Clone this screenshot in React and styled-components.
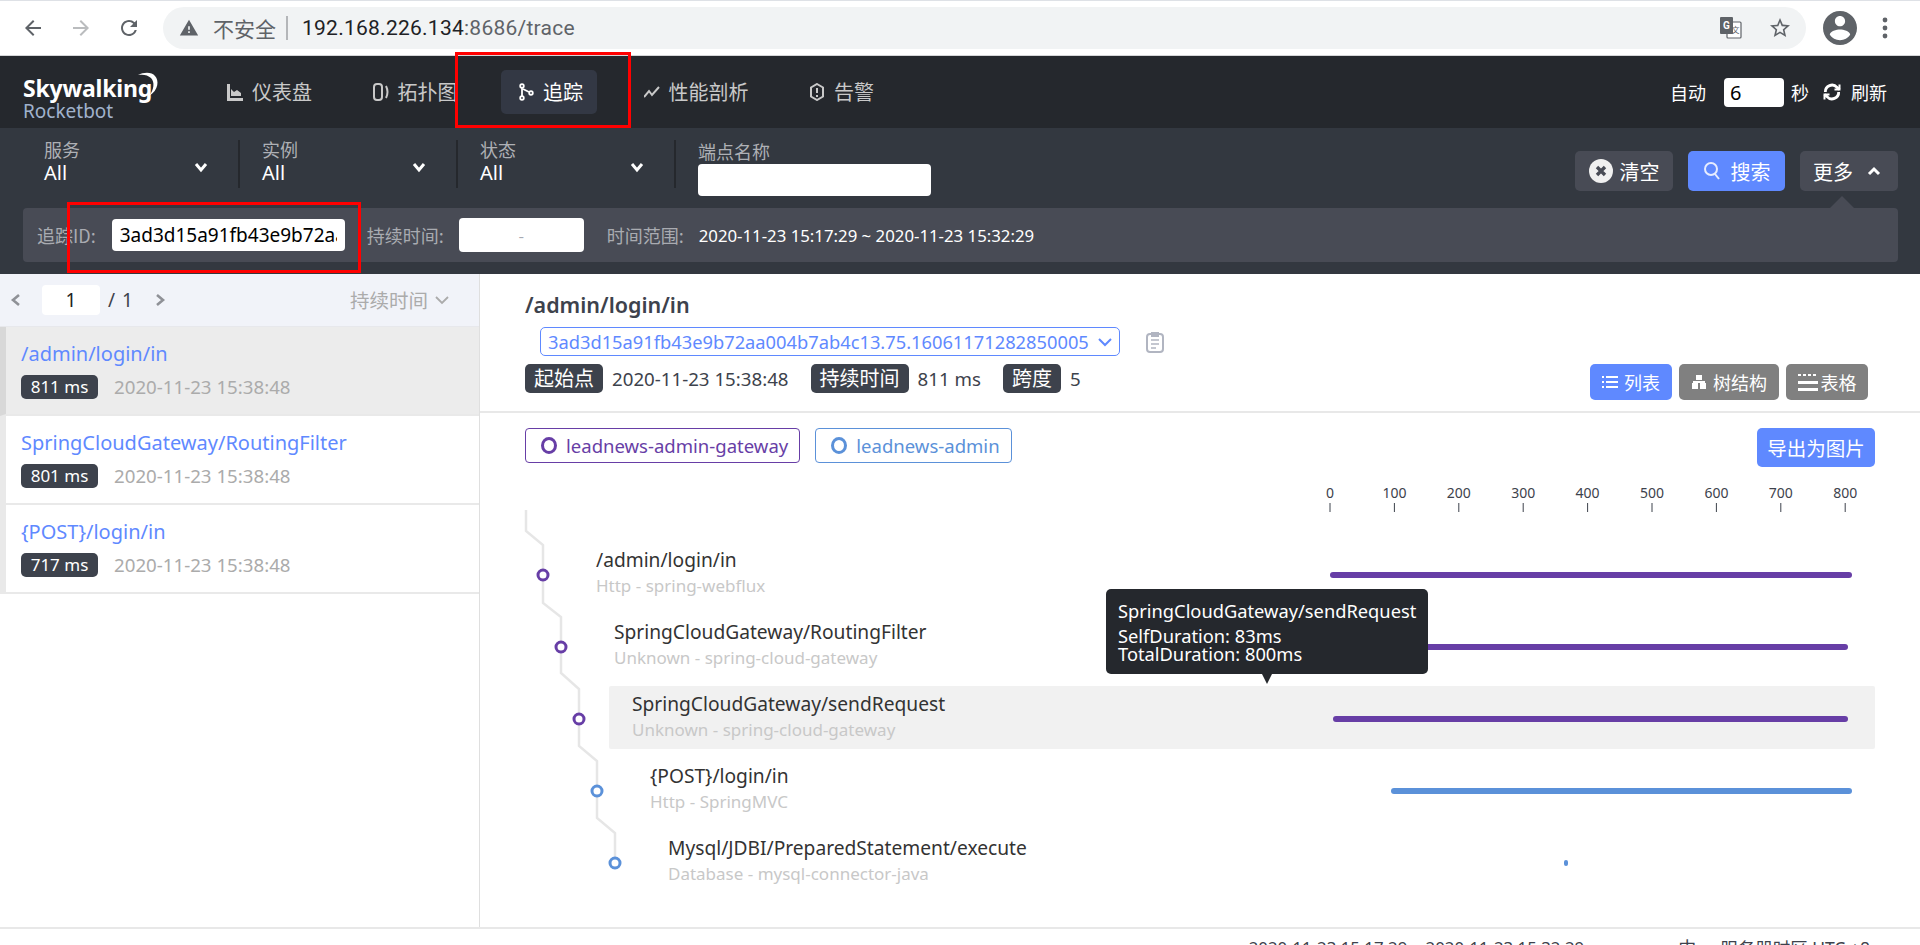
import React from 'react';
import styled, { createGlobalStyle } from 'styled-components';

const GlobalStyle = createGlobalStyle`
  html, body {
    margin: 0;
    padding: 0;
    overflow: hidden;
    background: #fff;
  }
  body {
    font-family: "Noto Sans", "Noto Sans CJK SC", sans-serif;
    color: #3d424c;
  }
  * { box-sizing: border-box; }
`;

const Page = styled.div`
  position: relative;
  width: 1920px;
  height: 945px;
  overflow: hidden;
  display: flex;
  flex-direction: column;
`;

/* ---- browser chrome ---- */
const BrowserBar = styled.div`
  height: 56px;
  flex: none;
  display: flex;
  align-items: center;
  background: #fff;
  border-top: 1px solid #dee1e6;
  border-bottom: 1px solid #d5d6d8;
  padding-bottom: 1px;
`;

const BrowserBtn = styled.svg`
  flex: none;
  width: 24px;
  height: 24px;
  margin-left: ${p => p.$gap}px;
  fill: ${p => p.$muted ? '#babcbe' : '#5f6368'};
`;

const AddressPill = styled.div`
  width: 1643px;
  height: 42px;
  margin-left: 22px;
  border-radius: 21px;
  background: #f1f3f4;
  display: flex;
  align-items: center;
  padding-left: 16px;
`;

const Warning = styled.svg`
  width: 20px;
  height: 20px;
  fill: #5f6368;
`;

const Insecure = styled.span`
  margin-left: 14px;
  font-family: "Noto Sans CJK SC", sans-serif;
  font-size: 21px;
  line-height: 28px;
  color: #5f6368;
`;

const AddressSep = styled.span`
  width: 2px;
  height: 24px;
  margin: 0 14px 0 10px;
  background: #b4b6b9;
`;

const Url = styled.span`
  font-family: Roboto, sans-serif;
  font-size: 21px;
  color: #202124;
  letter-spacing: 0.25px;
  span { color: #5f6368; }
`;

const PillTools = styled.div`
  margin-left: auto;
  display: flex;
  align-items: center;
  gap: 26px;
  padding-right: 14px;
`;

const ChromeRight = styled.div`
  display: flex;
  align-items: center;
  margin-left: 17px;
  gap: 24px;
`;

const Avatar = styled.svg`
  width: 34px;
  height: 34px;
  fill: #5f6368;
`;

const Dots = styled.svg`
  width: 8px;
  height: 24px;
  fill: #5f6368;
`;

/* ---- app header ---- */
const Header = styled.header`
  height: 72px;
  flex: none;
  background: #25282d;
  display: flex;
  align-items: center;
  color: #fff;
`;

const Logo = styled.div`
  position: relative;
  width: 210px;
  height: 72px;
  padding: 17px 0 0 23px;
`;

const LogoMain = styled.div`
  font-size: 23px;
  line-height: 30px;
  font-weight: 700;
  letter-spacing: -0.2px;
  color: #fff;
`;

const LogoSub = styled.div`
  font-size: 19px;
  line-height: 20px;
  margin-top: -2px;
  color: #a0b2cc;
`;

const Moon = styled.svg`
  position: absolute;
  left: 136px;
  top: 16px;
  width: 24px;
  height: 28px;
  fill: #fff;
`;

const Nav = styled.nav`
  display: flex;
  align-items: center;
  gap: 29.5px;
`;

const NavItem = styled.a`
  height: 44px;
  display: flex;
  align-items: center;
  gap: 9px;
  padding: 0 14px 0 17px;
  border-radius: 5px;
  font-family: "Noto Sans CJK SC", sans-serif;
  font-size: 20px;
  line-height: 28px;
  color: ${p => p.$active ? '#fff' : '#c9c9c9'};
  background: ${p => p.$active ? '#333844' : 'transparent'};
  svg { width: 16px; height: 18px; flex: none; }
`;

const RefreshArea = styled.div`
  margin-left: auto;
  display: flex;
  align-items: center;
  padding-right: 33px;
  font-family: "Noto Sans CJK SC", sans-serif;
  font-size: 18px;
`;

const AutoInput = styled.div`
  width: 60px;
  height: 29px;
  margin: 0 7px 0 18px;
  padding-left: 6px;
  border-radius: 4px;
  background: #fff;
  color: #000;
  font-family: "Noto Sans", sans-serif;
  font-size: 20px;
  line-height: 29px;
`;

const RefreshIcon = styled.svg`
  width: 20px;
  height: 20px;
  margin: 0 9px 0 13px;
  fill: none;
  stroke: #fff;
  stroke-width: 3.4;
`;

/* ---- filter bar ---- */
const FilterBar = styled.section`
  height: 146px;
  flex: none;
  background: #333840;
  padding: 12px 22px 12px 22px;
  font-family: "Noto Sans CJK SC", sans-serif;
`;

const FilterTop = styled.div`
  height: 68px;
  display: flex;
  align-items: flex-start;
`;

const Selector = styled.div`
  position: relative;
  width: 218px;
  height: 48px;
  padding-left: 22px;
  border-right: 2px solid #25282d;
`;

const SelectorLabel = styled.div`
  font-size: 18px;
  line-height: 19px;
  margin-bottom: 2px;
  color: #aeb0b5;
`;

const SelectorValue = styled.div`
  font-family: "Noto Sans", sans-serif;
  font-size: 20px;
  line-height: 24px;
  color: #fff;
`;

const SelectorChevron = styled.svg`
  position: absolute;
  left: 172px;
  top: 20px;
  width: 14px;
  height: 14px;
  fill: none;
  stroke: #fff;
  stroke-width: 3;
`;

const EndpointField = styled.div`
  margin-left: 22px;
  width: 233px;
`;

const EndpointLabel = styled.div`
  font-size: 18px;
  line-height: 22px;
  margin-bottom: 2px;
  color: #aeb0b5;
`;

const WhiteInput = styled.div`
  width: ${p => p.$w}px;
  height: ${p => p.$h}px;
  margin-left: ${p => p.$m || 0}px;
  background: #fff;
  border-radius: 4px;
  overflow: hidden;
  white-space: nowrap;
`;

const FilterActions = styled.div`
  margin-left: auto;
  display: flex;
  gap: 15px;
  padding-top: 11px;
`;

const ActionBtn = styled.button`
  position: relative;
  width: ${p => p.$w}px;
  height: 40px;
  border: 0;
  border-radius: 5px;
  background: ${p => p.$primary ? '#5f89ff' : '#484b55'};
  color: #fff;
  font-family: inherit;
  font-size: 20px;
  display: flex;
  align-items: center;
  justify-content: center;
  gap: ${p => p.$gap || 8}px;
  padding: 0 ${p => p.$arrow ? 4 : 0}px 0 0;
  svg { flex: none; }
  ${p => p.$arrow && `
    &::after {
      content: "";
      position: absolute;
      left: 30px;
      bottom: -17px;
      border: 12px solid transparent;
      border-top: 0;
      border-bottom-color: #484b55;
    }
  `}
`;

const MorePanel = styled.div`
  height: 54px;
  margin-left: 1px;
  border-radius: 4px;
  background: #484b55;
  display: flex;
  align-items: center;
  padding-left: 14px;
`;

const PanelLabel = styled.span`
  font-size: 18px;
  color: #a9abb1;
  white-space: nowrap;
  margin: ${p => p.$m || 0};
`;

const TraceIdText = styled.div`
  font-family: "Noto Sans", sans-serif;
  font-size: 19px;
  line-height: 32px;
  color: #000;
  margin-left: 8px;
  width: 217px;
  overflow: hidden;
`;

const DurationBox = styled(WhiteInput)`
  text-align: center;
  color: #a6a9b2;
  font-size: 16px;
  line-height: 34px;
`;

const RangeText = styled.span`
  font-family: "Noto Sans", sans-serif;
  font-size: 16.8px;
  color: #fff;
  white-space: nowrap;
`;

/* ---- body ---- */
const Body = styled.main`
  flex: 1;
  display: flex;
  min-height: 0;
`;

const TraceList = styled.aside`
  width: 480px;
  flex: none;
  border-right: 1px solid #dfdfdf;
`;

const Pager = styled.div`
  height: 53px;
  display: flex;
  align-items: center;
  padding: 0 30px 1px 10px;
  background: #f1f3f9;
  border-bottom: 1px solid #e7e8ec;
`;

const PagerChevron = styled.svg`
  width: ${p => p.$w || 12}px;
  height: 14px;
  fill: none;
  stroke: ${p => p.$thin ? '#ababab' : '#8f9197'};
  stroke-width: ${p => p.$thin ? 1.8 : 2.6};
  margin: ${p => p.$m || 0};
`;

const PageInput = styled.div`
  width: 58px;
  height: 30px;
  background: #fff;
  border-radius: 4px;
  text-align: center;
  font-size: 19px;
  line-height: 30px;
  color: #222;
`;

const PageTotal = styled.span`
  font-size: 19px;
  color: #3d424c;
  margin-left: 8px;
  word-spacing: 2px;
`;

const SortBy = styled.div`
  margin-left: auto;
  display: flex;
  align-items: center;
  gap: 7px;
  color: #ababab;
  font-family: "Noto Sans CJK SC", sans-serif;
  font-size: 19.5px;
`;

const TraceItem = styled.div`
  height: 89px;
  padding: 13px 0 0 15px;
  border-left: 6px solid ${p => p.$active ? '#d8d8d8' : '#e9e9e9'};
  border-bottom: 2px solid #e9e9e9;
  background: ${p => p.$active ? '#ececec' : '#fff'};
`;

const TraceTitle = styled.div`
  font-size: 20px;
  line-height: 28px;
  color: #5f89ff;
`;

const TraceMeta = styled.div`
  margin-top: 6px;
  display: flex;
  align-items: center;
  gap: 16px;
`;

const MsBadge = styled.span`
  width: 77px;
  height: 24px;
  border-radius: 5px;
  background: #3d424c;
  color: #fff;
  font-size: 17px;
  line-height: 24px;
  text-align: center;
`;

const TraceDate = styled.span`
  font-size: 18.7px;
  line-height: 26px;
  color: #ababab;
`;

const Detail = styled.div`
  flex: 1;
  min-width: 0;
`;

const DetailHead = styled.div`
  padding: 19px 52px 11px 45px;
  border-bottom: 2px solid #e8e8e8;
`;

const DetailTitle = styled.h2`
  margin: 0;
  font-size: 21.5px;
  line-height: 24px;
  font-weight: 600;
  color: #3d424c;
`;

const IdRow = styled.div`
  margin-top: 10px;
  display: flex;
  align-items: center;
  padding-left: 15px;
  gap: 26px;
`;

const IdSelect = styled.div`
  width: 580px;
  height: 29px;
  border: 1px solid #5f89ff;
  border-radius: 5px;
  color: #5f89ff;
  display: flex;
  align-items: center;
  justify-content: space-between;
  padding: 0 7px;
  font-size: 18.3px;
  white-space: nowrap;
`;

const ClipboardIcon = styled.svg`
  width: 18px;
  height: 22px;
  fill: none;
  stroke: #b1b5c1;
  stroke-width: 2;
`;

const MetaRow = styled.div`
  margin-top: 8px;
  height: 36px;
  display: flex;
  align-items: flex-start;
  justify-content: space-between;
`;

const MetaList = styled.div`
  display: flex;
  align-items: center;
  height: 29px;
`;

const MetaTag = styled.span`
  height: 29px;
  padding: 0 9px;
  background: #3d424c;
  border-radius: 5px;
  color: #fff;
  font-family: "Noto Sans CJK SC", sans-serif;
  font-size: 20px;
  line-height: 28px;
`;

const MetaValue = styled.span`
  margin: 0 22px 0 9px;
  font-size: 18.7px;
`;

const ViewSwitch = styled.div`
  display: flex;
  gap: 7px;
`;

const ViewBtn = styled.button`
  height: 36px;
  width: ${p => p.$w}px;
  border: 0;
  padding: 0;
  border-radius: 5px;
  background: ${p => p.$active ? '#5f89ff' : '#808080'};
  color: #fff;
  font-family: "Noto Sans CJK SC", sans-serif;
  font-size: 18px;
  display: flex;
  align-items: center;
  justify-content: center;
  gap: ${p => p.$gap || 6}px;
`;

const LegendRow = styled.div`
  padding: 15px 45px 0;
  display: flex;
  align-items: flex-start;
  justify-content: space-between;
`;

const Legends = styled.div`
  display: flex;
  gap: 15px;
`;

const Legend = styled.div`
  height: 35px;
  padding: 0 11px 0 15px;
  display: flex;
  align-items: center;
  gap: 9px;
  border: 1px solid ${p => p.$color};
  border-radius: 4px;
  color: ${p => p.$color};
  font-size: 18.55px;
`;

const LegendDot = styled.span`
  width: 16px;
  height: 17px;
  border: 3px solid ${p => p.$color};
  border-radius: 50%;
`;

const ExportBtn = styled.button`
  width: 118px;
  height: 39px;
  border: 0;
  padding: 0;
  border-radius: 5px;
  background: #5f89ff;
  color: #fff;
  font-family: "Noto Sans CJK SC", sans-serif;
  font-size: 19.5px;
`;

const Timeline = styled.div`
  position: relative;
`;

const Axis = styled.svg`
  display: block;
  width: 1440px;
  height: 48px;
  margin-bottom: 27px;
  text { font-size: 14px; fill: #3d424c; text-anchor: middle; }
  line { stroke: #3d424c; stroke-width: 1; }
`;

const Connector = styled.svg`
  position: absolute;
  left: 0;
  top: 0;
  width: 160px;
  height: 420px;
  pointer-events: none;
`;

const SpanRow = styled.div`
  position: relative;
  height: 63px;
  margin: 0 45px 9px ${p => 93 + p.$depth * 18}px;
  padding: 5px 0 0 23px;
  border-radius: 2px;
  background: ${p => p.$hover ? '#f1f1f1' : 'transparent'};
`;

const SpanName = styled.div`
  font-size: 19.2px;
  line-height: 26px;
  color: #333;
`;

const SpanSub = styled.div`
  font-size: 17px;
  line-height: 26px;
  color: #c8c8c8;
`;

const SpanBar = styled.div`
  position: absolute;
  top: 30px;
  height: 6px;
  border-radius: 3px;
  background: ${p => p.$color};
`;

const Tooltip = styled.div`
  position: absolute;
  left: 626px;
  top: 122px;
  width: 322px;
  height: 85px;
  padding: 9px 0 0 12px;
  background: #25282d;
  border-radius: 5px;
  color: #fff;
  font-size: 18.3px;
  line-height: 18px;
  white-space: nowrap;
  &::after {
    content: "";
    position: absolute;
    left: 156px;
    bottom: -10px;
    border-left: 5px solid transparent;
    border-right: 5px solid transparent;
    border-top: 10px solid #25282d;
  }
`;

const TooltipHead = styled.div`
  margin-bottom: 4px;
  line-height: 25px;
`;

const Footer = styled.footer`
  height: 18px;
  flex: none;
  border-top: 2px solid #e8e8e8;
  background: #fff;
  display: flex;
  justify-content: flex-end;
  align-items: flex-start;
  padding: 9px 50px 0 0;
  line-height: 20px;
  color: #3d424c;
`;

const FooterItem = styled.span`
  margin-left: ${p => p.$m || 0}px;
  font-size: ${p => p.$size}px;
  white-space: nowrap;
`;

/* the red boxes someone drew on the screenshot */
const Annotation = styled.div`
  position: absolute;
  left: ${p => p.$x}px;
  top: ${p => p.$y}px;
  width: ${p => p.$w}px;
  height: ${p => p.$h}px;
  border: 3px solid #f00;
  pointer-events: none;
`;

const PURPLE = '#673ea6';
const BLUE = '#5b91d9';

const traces = [
  { name: '/admin/login/in', ms: 811, active: true },
  { name: 'SpringCloudGateway/RoutingFilter', ms: 801 },
  { name: '{POST}/login/in', ms: 717 },
];

const spans = [
  { name: '/admin/login/in', sub: 'Http - spring-webflux', color: PURPLE, start: 0, dur: 811 },
  { name: 'SpringCloudGateway/RoutingFilter', sub: 'Unknown - spring-cloud-gateway', color: PURPLE, start: 4, dur: 801 },
  { name: 'SpringCloudGateway/sendRequest', sub: 'Unknown - spring-cloud-gateway', color: PURPLE, start: 4, dur: 800, hover: true },
  { name: '{POST}/login/in', sub: 'Http - SpringMVC', color: BLUE, start: 94, dur: 717 },
  { name: 'Mysql/JDBI/PreparedStatement/execute', sub: 'Database - mysql-connector-java', color: BLUE, start: 364, dur: 5 },
];

const TICK = 0.644;
const ticks = [0, 100, 200, 300, 400, 500, 600, 700, 800];
const axisX = ms => 850 + ms * TICK;

const linePoints = '46,43 46,64 63,78 63,136 81,150 81,206 99,222 99,279 117,294 117,351 135,366 135,396';
const nodes = [
  [63, 108, PURPLE], [81, 180, PURPLE], [99, 252, PURPLE], [117, 324, BLUE], [135, 396, BLUE],
];

const Chevron = ({ up }) => (
  <svg width="14" height="10" viewBox="0 0 14 10" fill="none" stroke="#fff" strokeWidth="3">
    <path d={up ? 'M2 8l5-5 5 5' : 'M2 2l5 5 5-5'} />
  </svg>
);

const App = () => (
  <Page>
    <GlobalStyle />
    <BrowserBar>
      <BrowserBtn $gap={21} viewBox="0 0 24 24"><path d="M20 11H7.83l5.59-5.59L12 4l-8 8 8 8 1.41-1.41L7.83 13H20v-2z" /></BrowserBtn>
      <BrowserBtn $gap={24} $muted viewBox="0 0 24 24"><path d="M4 11h12.17l-5.59-5.59L12 4l8 8-8 8-1.41-1.41L16.17 13H4v-2z" /></BrowserBtn>
      <BrowserBtn $gap={24} viewBox="0 0 24 24"><path d="M17.65 6.35A7.958 7.958 0 0 0 12 4c-4.42 0-7.99 3.58-7.99 8s3.57 8 7.99 8c3.73 0 6.84-2.55 7.73-6h-2.08A5.99 5.99 0 0 1 12 18c-3.31 0-6-2.69-6-6s2.69-6 6-6c1.66 0 3.14.69 4.22 1.78L13 11h7V4l-2.35 2.35z" /></BrowserBtn>
      <AddressPill>
        <Warning viewBox="0 0 24 24"><path d="M1 21h22L12 2 1 21zm12-3h-2v-2h2v2zm0-4h-2v-4h2v4z" /></Warning>
        <Insecure>不安全</Insecure>
        <AddressSep />
        <Url>192.168.226.134<span>:8686/trace</span></Url>
        <PillTools>
          <svg width="22" height="22" viewBox="0 0 22 22">
            <rect x="7" y="5" width="14" height="16" rx="1" fill="#fff" stroke="#5f6368" strokeWidth="1.2" />
            <rect x="0" y="0" width="13" height="17" rx="1" fill="#5f6368" />
            <text x="6.5" y="12" fontSize="10" fontWeight="700" fill="#fff" textAnchor="middle" fontFamily="Roboto">G</text>
            <text x="15.5" y="16" fontSize="8" fill="#5f6368" textAnchor="middle" fontFamily="Noto Sans CJK SC">文</text>
          </svg>
          <BrowserBtn $gap={0} viewBox="0 0 24 24"><path d="M22 9.24l-7.19-.62L12 2 9.19 8.63 2 9.24l5.46 4.73L5.82 21 12 17.27 18.18 21l-1.63-7.03L22 9.24zM12 15.4l-3.76 2.27 1-4.28-3.32-2.88 4.38-.38L12 6.1l1.71 4.04 4.38.38-3.32 2.88 1 4.28L12 15.4z" /></BrowserBtn>
        </PillTools>
      </AddressPill>
      <ChromeRight>
        <Avatar viewBox="2 2 20 20"><path d="M12 2C6.48 2 2 6.48 2 12s4.48 10 10 10 10-4.48 10-10S17.52 2 12 2zm0 3c1.66 0 3 1.34 3 3s-1.34 3-3 3-3-1.34-3-3 1.34-3 3-3zm0 14.2c-2.5 0-4.71-1.28-6-3.22.03-1.99 4-3.08 6-3.08 1.99 0 5.97 1.09 6 3.08-1.29 1.94-3.5 3.22-6 3.22z" /></Avatar>
        <Dots viewBox="0 0 8 24"><circle cx="4" cy="4" r="2.4" /><circle cx="4" cy="12" r="2.4" /><circle cx="4" cy="20" r="2.4" /></Dots>
      </ChromeRight>
    </BrowserBar>

    <Header>
      <Logo>
        <LogoMain>Skywalking</LogoMain>
        <LogoSub>Rocketbot</LogoSub>
        <Moon viewBox="0 0 24 28"><path d="M2 3C8 0 16 0 19 4c4 4 4 14-6 20 5-6 6-14 2-18C12 3 7 2 2 3z" /></Moon>
      </Logo>
      <Nav>
        <NavItem>
          <svg viewBox="0 0 16 18" fill="#c9c9c9"><path d="M0 1h3v14h13v3H0zM4 13V6l3 3 3-2 4 3v3z" /></svg>
          仪表盘
        </NavItem>
        <NavItem>
          <svg viewBox="0 0 16 18" fill="none" stroke="#c9c9c9" strokeWidth="2"><rect x="1" y="1" width="8" height="16" rx="3" /><path d="M13 3c2 4 2 8 0 12" /></svg>
          拓扑图
        </NavItem>
        <NavItem $active>
          <svg viewBox="0 0 16 18" fill="none" stroke="#fff" strokeWidth="1.8"><circle cx="4" cy="3" r="1.8" /><circle cx="4" cy="15" r="1.8" /><circle cx="13" cy="10" r="1.8" /><path d="M4 5v8M5 6l6 3" /></svg>
          追踪
        </NavItem>
        <NavItem>
          <svg viewBox="0 0 16 18" fill="none" stroke="#c9c9c9" strokeWidth="2"><path d="M0 14l5-6 3 4 7-8" /></svg>
          性能剖析
        </NavItem>
        <NavItem>
          <svg viewBox="0 0 16 18" fill="none" stroke="#c9c9c9" strokeWidth="2"><path d="M8 1l6 3.5v9L8 17l-6-3.5v-9z" /><path d="M8 5v5M8 12v2" /></svg>
          告警
        </NavItem>
      </Nav>
      <RefreshArea>
        自动
        <AutoInput>6</AutoInput>
        秒
        <RefreshIcon viewBox="0 0 24 24"><path d="M4 12a8 8 0 0 1 14-5.500L21 9M20 12a8 8 0 0 1-14 5.500L3 15" /><path d="M21 3v6h-6M3 21v-6h6" strokeWidth="2.4" /></RefreshIcon>
        刷新
      </RefreshArea>
    </Header>

    <FilterBar>
      <FilterTop>
        {['服务', '实例', '状态'].map(label => (
          <Selector key={label}>
            <SelectorLabel>{label}</SelectorLabel>
            <SelectorValue>All</SelectorValue>
            <SelectorChevron viewBox="0 0 14 14"><path d="M2 4l5 6 5-6" /></SelectorChevron>
          </Selector>
        ))}
        <EndpointField>
          <EndpointLabel>端点名称</EndpointLabel>
          <WhiteInput $w={233} $h={32} />
        </EndpointField>
        <FilterActions>
          <ActionBtn $w={98} $gap={7}>
            <svg width="24" height="24" viewBox="0 0 24 24"><circle cx="12" cy="12" r="12" fill="#f0f0f0" /><path d="M8 8l8 8M16 8l-8 8" stroke="#484b55" strokeWidth="3.4" /></svg>
            清空
          </ActionBtn>
          <ActionBtn $w={97} $primary $gap={10}>
            <svg width="18" height="20" viewBox="0 0 18 20" fill="none" stroke="#e6ecff" strokeWidth="2"><circle cx="8" cy="8" r="6" /><path d="M12 13l4 5" /></svg>
            搜索
          </ActionBtn>
          <ActionBtn $w={98} $arrow $gap={14}>更多<Chevron up /></ActionBtn>
        </FilterActions>
      </FilterTop>
      <MorePanel>
        <PanelLabel>追踪ID:</PanelLabel>
        <WhiteInput $w={233} $h={32} $m={16}>
          <TraceIdText>3ad3d15a91fb43e9b72aa004b7ab4c13.75.16061171282850005</TraceIdText>
        </WhiteInput>
        <PanelLabel $m="0 15px 0 22px">持续时间:</PanelLabel>
        <DurationBox $w={125} $h={34}>-</DurationBox>
        <PanelLabel $m="0 15px 0 23px">时间范围:</PanelLabel>
        <RangeText>2020-11-23 15:17:29 ~ 2020-11-23 15:32:29</RangeText>
      </MorePanel>
    </FilterBar>

    <Body>
      <TraceList>
        <Pager>
          <PagerChevron viewBox="0 0 12 14" $m="0 20px 0 0"><path d="M9 2L3 7l6 5" /></PagerChevron>
          <PageInput>1</PageInput>
          <PageTotal>/ 1</PageTotal>
          <PagerChevron viewBox="0 0 12 14" $m="0 0 0 21px"><path d="M3 2l6 5-6 5" /></PagerChevron>
          <SortBy>
            持续时间
            <PagerChevron viewBox="0 0 14 14" $w={14} $thin><path d="M1 4l6 6 6-6" /></PagerChevron>
          </SortBy>
        </Pager>
        {traces.map(t => (
          <TraceItem key={t.name} $active={t.active}>
            <TraceTitle>{t.name}</TraceTitle>
            <TraceMeta>
              <MsBadge>{t.ms} ms</MsBadge>
              <TraceDate>2020-11-23 15:38:48</TraceDate>
            </TraceMeta>
          </TraceItem>
        ))}
      </TraceList>

      <Detail>
        <DetailHead>
          <DetailTitle>/admin/login/in</DetailTitle>
          <IdRow>
            <IdSelect>
              3ad3d15a91fb43e9b72aa004b7ab4c13.75.16061171282850005
              <svg width="14" height="10" viewBox="0 0 14 10" fill="none" stroke="#5f89ff" strokeWidth="2"><path d="M1 2l6 6 6-6" /></svg>
            </IdSelect>
            <ClipboardIcon viewBox="0 0 18 22">
              <rect x="1" y="3" width="16" height="18" rx="3" />
              <path d="M6 2h6v3H6z" fill="#b1b5c1" />
              <path d="M5 9h8M5 13h8M5 17h5" strokeWidth="1.4" />
            </ClipboardIcon>
          </IdRow>
          <MetaRow>
            <MetaList>
              <MetaTag>起始点</MetaTag>
              <MetaValue>2020-11-23 15:38:48</MetaValue>
              <MetaTag>持续时间</MetaTag>
              <MetaValue>811 ms</MetaValue>
              <MetaTag>跨度</MetaTag>
              <MetaValue>5</MetaValue>
            </MetaList>
            <ViewSwitch>
              <ViewBtn $active $w={82}>
                <svg width="16" height="14" viewBox="0 0 16 14" fill="#fff"><path d="M0 1h2v2H0zM4 1h12v2H4zM0 6h2v2H0zM4 6h12v2H4zM0 11h2v2H0zM4 11h12v2H4z" /></svg>
                列表
              </ViewBtn>
              <ViewBtn $w={100}>
                <svg width="16" height="16" viewBox="0 0 16 16" fill="#fff"><path d="M5 1h6v5H5zM1 9h6v6H1zM9 9h6v6H9zM2 7h12v2H2z" /></svg>
                树结构
              </ViewBtn>
              <ViewBtn $w={82} $gap={3}>
                <svg width="20" height="20" viewBox="0 0 20 20" fill="#fff"><path d="M0 2h3v2H0zM5 2h3v2H5zM10 2h3v2h-3zM15 2h3v2h-3zM0 9h20v3H0zM0 16h20v3H0z" /></svg>
                表格
              </ViewBtn>
            </ViewSwitch>
          </MetaRow>
        </DetailHead>

        <LegendRow>
          <Legends>
            <Legend $color={PURPLE}><LegendDot $color={PURPLE} />leadnews-admin-gateway</Legend>
            <Legend $color={BLUE}><LegendDot $color={BLUE} />leadnews-admin</Legend>
          </Legends>
          <ExportBtn>导出为图片</ExportBtn>
        </LegendRow>

        <Timeline>
          <Axis viewBox="0 0 1440 48">
            {ticks.map(t => (
              <g key={t}>
                <text x={axisX(t)} y={31}>{t}</text>
                <line x1={axisX(t)} x2={axisX(t)} y1={36} y2={45} />
              </g>
            ))}
          </Axis>
          <Connector viewBox="0 0 160 420">
            <polyline points={linePoints} fill="none" stroke="#e6e6e6" strokeWidth="2.5" />
            {nodes.map(([x, y, c]) => (
              <circle key={y} cx={x} cy={y} r="5" fill="#fff" stroke={c} strokeWidth="3" />
            ))}
          </Connector>
          {spans.map((s, i) => (
            <SpanRow key={s.name} $depth={i} $hover={s.hover}>
              <SpanName>{s.name}</SpanName>
              <SpanSub>{s.sub}</SpanSub>
              <SpanBar
                $color={s.color}
                style={{ left: axisX(s.start) - (93 + i * 18), width: s.dur * TICK }}
              />
            </SpanRow>
          ))}
          <Tooltip>
            <TooltipHead>SpringCloudGateway/sendRequest</TooltipHead>
            <div>SelfDuration: 83ms</div>
            <div>TotalDuration: 800ms</div>
          </Tooltip>
        </Timeline>
      </Detail>
    </Body>

    <Footer>
      <FooterItem $size={16.8}>2020-11-23 15:17:29 ~ 2020-11-23 15:32:29</FooterItem>
      <FooterItem $size={18} $m={94}>中</FooterItem>
      <FooterItem $size={17.5} $m={24}>服务器时区 UTC +8</FooterItem>
    </Footer>

    <Annotation $x={455} $y={52} $w={176} $h={76} />
    <Annotation $x={67} $y={202} $w={294} $h={71} />
  </Page>
);

export default App;
